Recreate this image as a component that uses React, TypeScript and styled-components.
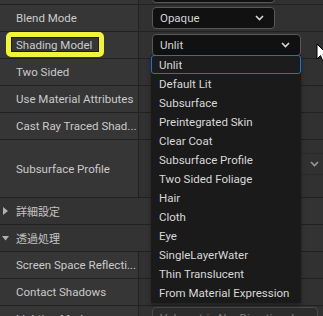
import React from 'react'
import styled, { createGlobalStyle } from 'styled-components'

const GlobalStyle = createGlobalStyle`
    html, body {
        margin : 0;
        padding : 0;
        background : #363636;
        overflow : hidden;
    }
`

const Panel = styled.div`
    position : relative;
    width : 323px;
    height : 316px;
    overflow : hidden;
    background : #363636;
    font-family : Roboto, "Noto Sans CJK JP", sans-serif;
    font-size : 11.5px;
    color : #cacaca;
`

const Row = styled.div<{ $h: number }>`
    display : grid;
    grid-template-columns : 139px 1fr;
    height : ${p => p.$h}px;
    border-bottom : 1px solid #212121;
`

const Label = styled.div`
    display : flex;
    align-items : center;
    padding-left : 16px;
    border-right : 1px solid #212121;
    white-space : nowrap;
    overflow : hidden;
`

const Value = styled.div`
    position : relative;
    display : flex;
    align-items : center;
    padding-left : 13px;
    background : #313131;
    overflow : hidden;
`

const CategoryRow = styled.div`
    display : flex;
    align-items : center;
    gap : 7px;
    height : 26px;
    padding-left : 2px;
    border-bottom : 1px solid #212121;
    background : #333333;
    font-size : 11px;
    color : #c4c4c4;
`

const Combo = styled.div<{ $w: number; $muted?: boolean }>`
    display : flex;
    align-items : center;
    justify-content : space-between;
    box-sizing : border-box;
    width : ${p => p.$w}px;
    height : 22px;
    padding : 0 10px 0 7px;
    border : 1px solid ${p => p.$muted ? '#4a4a4a' : '#585858'};
    border-radius : 4px;
    background : ${p => p.$muted ? '#2c2c2c' : '#111111'};
    color : ${p => p.$muted ? '#7a7a7a' : '#d4d4d4'};
    white-space : nowrap;
    flex-shrink : 0;
`

const TopStub = styled(Combo)`
    margin-top : -20px;
`

const ProfileCombo = styled(Combo)`
    margin-top : -10px;
    padding-right : 5px;
    background : #313131;
    border-color : #2a2a2a;
    justify-content : flex-end;
`

const LightingCombo = styled(Combo)`
    align-self : flex-start;
    margin-top : 1px;
`

const Menu = styled.div`
    position : absolute;
    left : 151px;
    top : 55px;
    width : 150px;
    padding-bottom : 1px;
    background : #1a1a1a;
    box-shadow : 0 2px 4px rgba(0,0,0,0.35);
`

const MenuItem = styled.div<{ $active?: boolean }>`
    box-sizing : border-box;
    height : 19px;
    display : flex;
    align-items : center;
    padding-left : ${p => p.$active ? '7px' : '8px'};
    color : #d8d8d8;
    white-space : nowrap;
    ${p => p.$active && `
        border : 1px solid #1f6fd8;
        border-radius : 3px;
        background : #1c1c1c;
    `}
`

const Highlight = styled.div`
    position : absolute;
    left : 6px;
    top : 32px;
    width : 98px;
    height : 25px;
    box-sizing : border-box;
    border : 5px solid #f3f23c;
    border-radius : 5px;
    box-shadow : inset 0 0 0 1px #1c1c1c;
    pointer-events : none;
`

const Cursor = styled.svg`
    position : absolute;
    left : 316px;
    top : 43px;
`

const Spacer = styled.span`
    width : 12px;
`

const Chevron = ({ color = '#d8d8d8' }: { color?: string }) => (
    <svg width="9" height="6" viewBox="0 0 9 6">
        <polyline points="1,1 4.5,4.5 8,1" fill="none" stroke={color} strokeWidth="1.6" />
    </svg>
)

const Triangle = ({ open }: { open?: boolean }) => (
    <svg width="7" height="8" viewBox="0 0 7 8">
        {open
            ? <polygon points="0,2 7,2 3.5,6.5" fill="#b0b0b0" />
            : <polygon points="1,0 6,4 1,8" fill="#b0b0b0" />}
    </svg>
)

const shadingModels = [
    'Unlit',
    'Default Lit',
    'Subsurface',
    'Preintegrated Skin',
    'Clear Coat',
    'Subsurface Profile',
    'Two Sided Foliage',
    'Hair',
    'Cloth',
    'Eye',
    'SingleLayerWater',
    'Thin Translucent',
    'From Material Expression',
]

function App() {
    return (
        <Panel>
            <GlobalStyle />
            <Row $h={4}>
                <Label />
                <Value>
                    <TopStub $w={123} />
                </Value>
            </Row>
            <Row $h={26}>
                <Label>Blend Mode</Label>
                <Value>
                    <Combo $w={123}>Opaque<Chevron /></Combo>
                </Value>
            </Row>
            <Row $h={26}>
                <Label>Shading Model</Label>
                <Value>
                    <Combo $w={149}>Unlit<Chevron /></Combo>
                </Value>
            </Row>
            <Row $h={26}>
                <Label>Two Sided</Label>
                <Value />
            </Row>
            <Row $h={26}>
                <Label>Use Material Attributes</Label>
                <Value />
            </Row>
            <Row $h={26}>
                <Label>Cast Ray Traced Shad...</Label>
                <Value />
            </Row>
            <Row $h={57}>
                <Label>Subsurface Profile</Label>
                <Value>
                    <ProfileCombo $w={185}><Chevron color="#9a9a9a" /><Spacer /></ProfileCombo>
                </Value>
            </Row>
            <CategoryRow><Triangle />詳細設定</CategoryRow>
            <CategoryRow><Triangle open />透過処理</CategoryRow>
            <Row $h={26}>
                <Label>Screen Space Reflecti...</Label>
                <Value />
            </Row>
            <Row $h={26}>
                <Label>Contact Shadows</Label>
                <Value />
            </Row>
            <Row $h={26}>
                <Label>Lighting Mode</Label>
                <Value>
                    <LightingCombo $w={166} $muted>Volumetric NonDirectional</LightingCombo>
                </Value>
            </Row>

            <Menu>
                {shadingModels.map((m, i) => (
                    <MenuItem key={m} $active={i === 0}>{m}</MenuItem>
                ))}
            </Menu>

            <Highlight />

            <Cursor width="12" height="20" viewBox="0 0 12 20">
                <path d="M1,1 L1,16 L4.5,12.5 L7,18.5 L9.5,17.5 L7,11.5 L11.5,11.5 Z" fill="#ffffff" stroke="#000000" strokeWidth="1" />
            </Cursor>
        </Panel>
    )
}

export default App
